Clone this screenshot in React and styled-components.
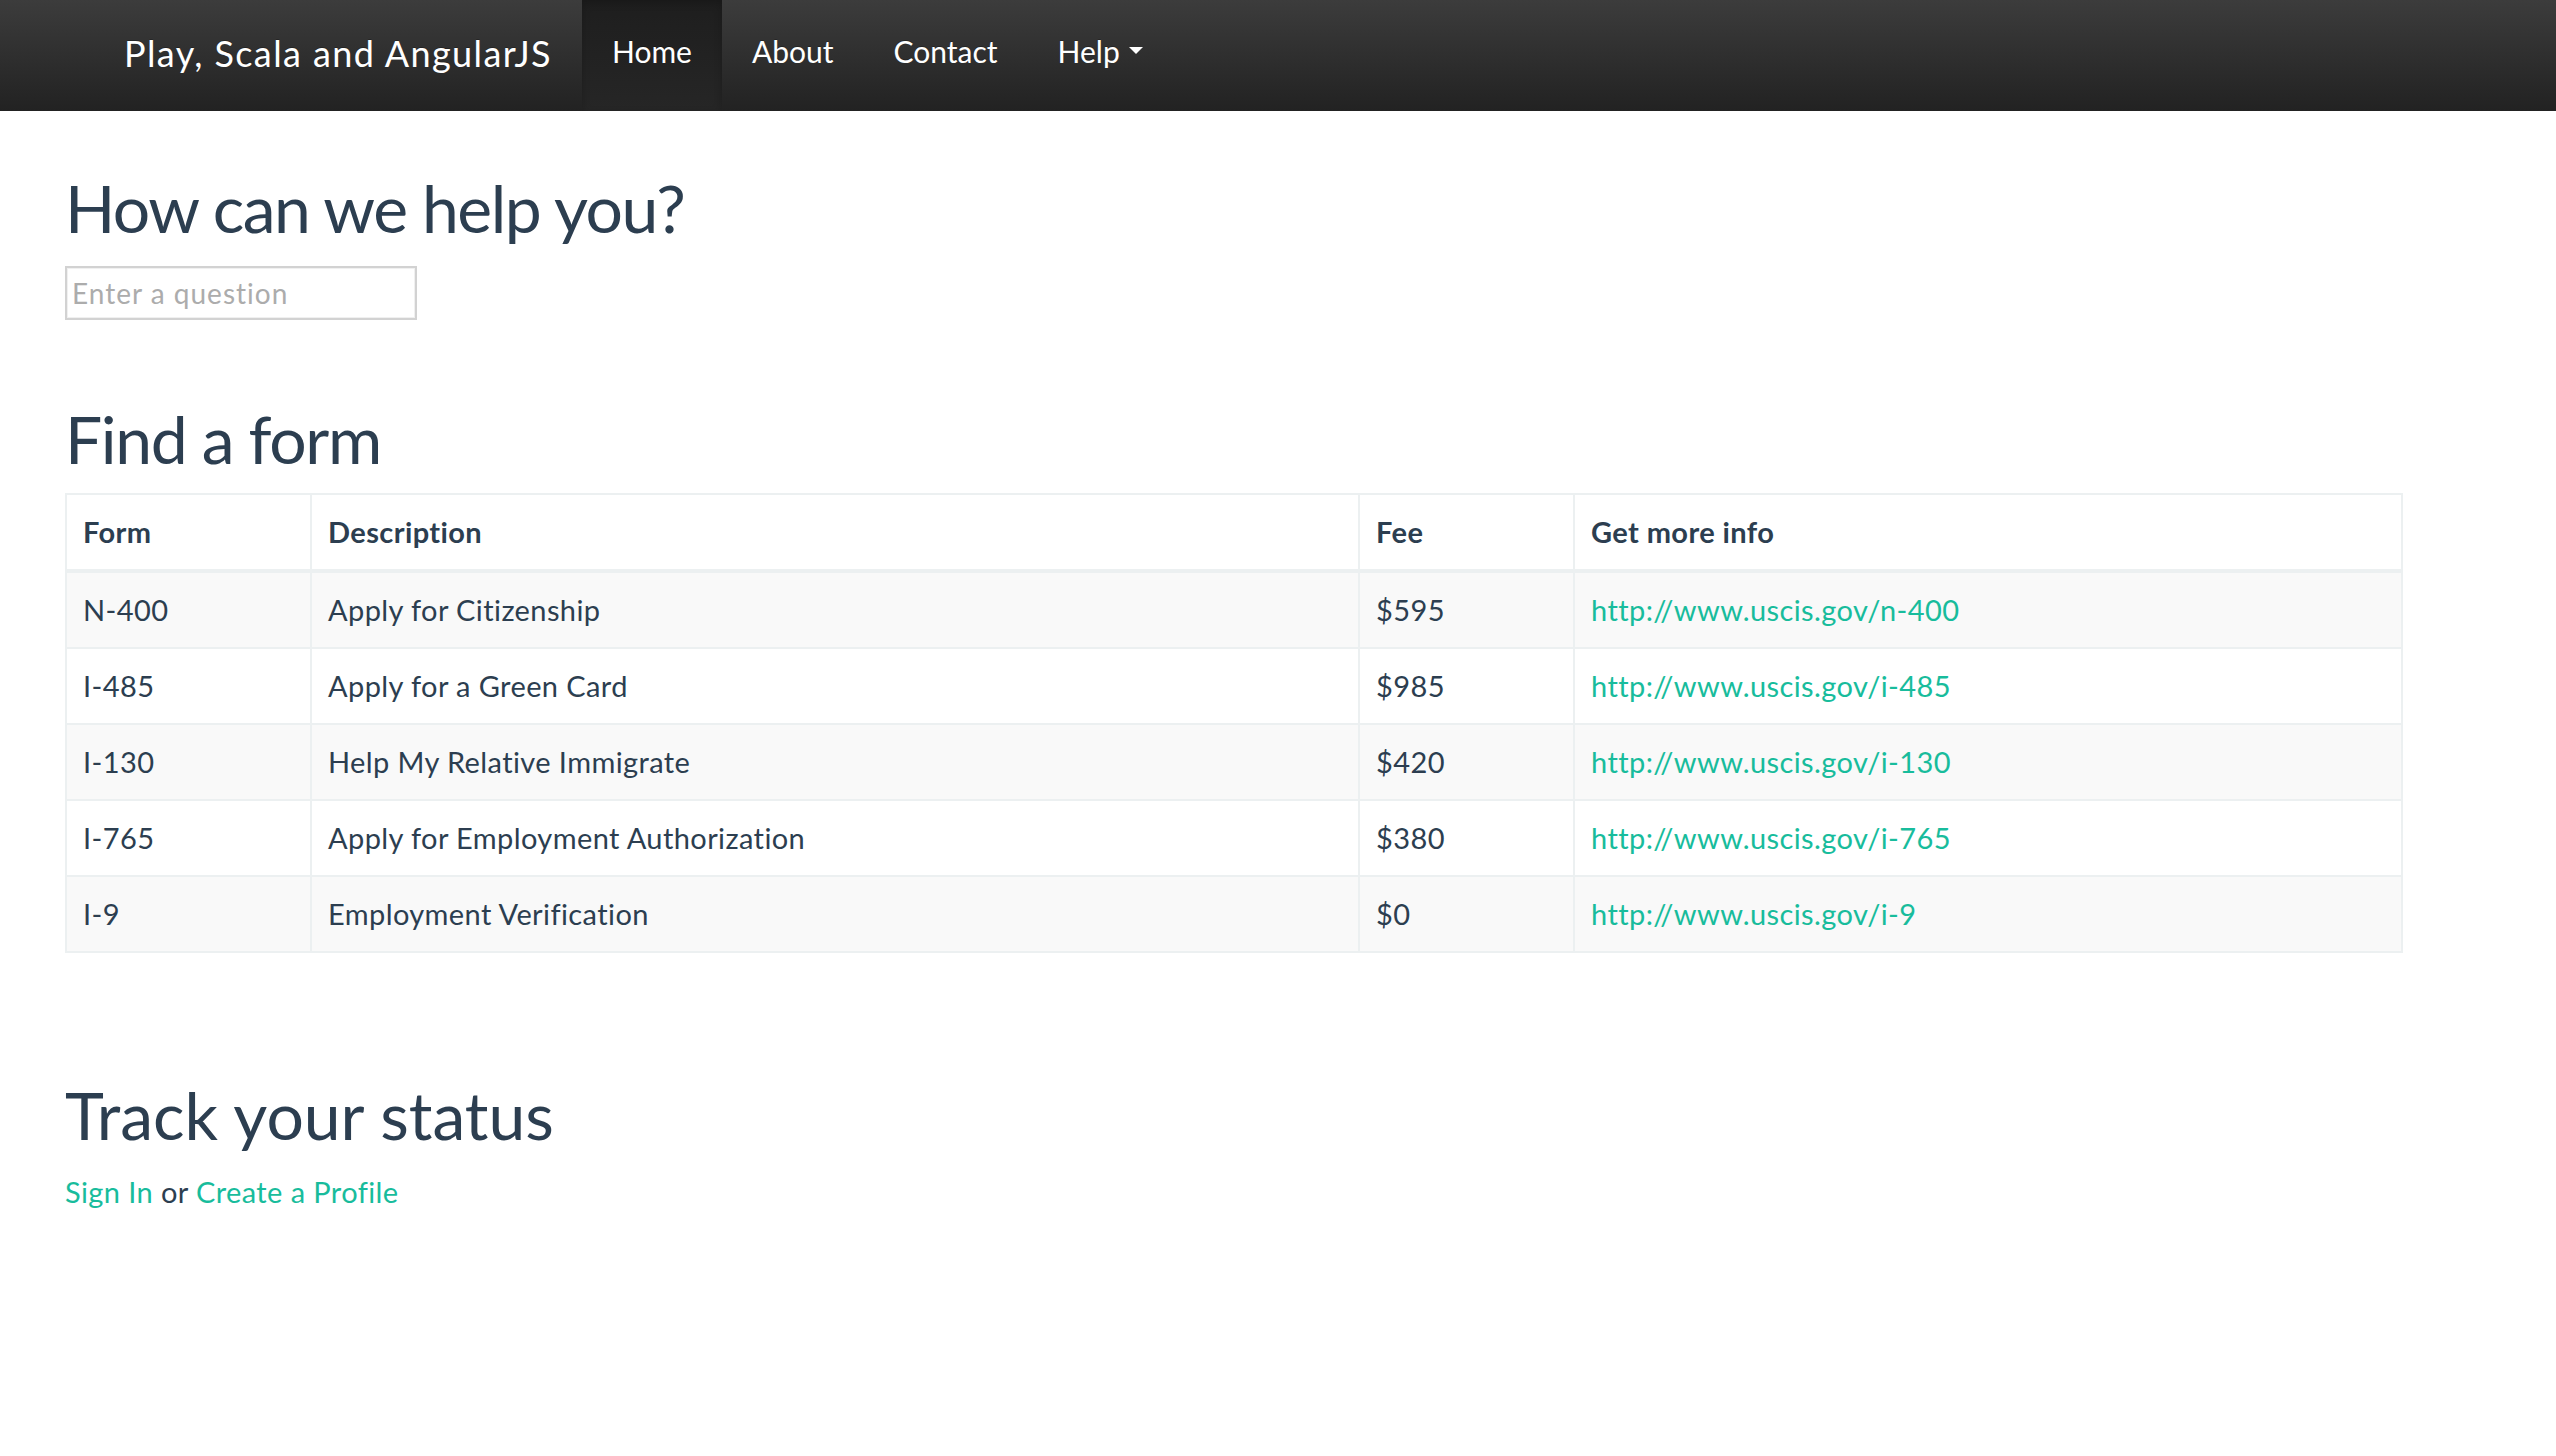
import styled, { createGlobalStyle } from "styled-components"

const GlobalStyle = createGlobalStyle`
    body {
        margin: 0;
        background: #fff;
        font-family: Lato, "Open Sans", sans-serif;
        color: #2c3e50;
    }
`

const Navbar = styled.nav`
    height: 111px;
    background: linear-gradient(to bottom, #3c3c3c 0%, #222 100%);
    display: flex;
    align-items: stretch;
    padding-left: 94px;
    box-sizing: border-box;
`

const Brand = styled.a`
    padding: 0 30px 4px 30px;
    line-height: 107px;
    font-size: 36px;
    letter-spacing: 1.4px;
    color: #fff;
    text-decoration: none;
    text-shadow: 0 -1px 0 rgba(0,0,0,0.25);
`

const NavList = styled.ul`
    display: flex;
    list-style: none;
    margin: 0;
    padding: 0;
`

const NavItem = styled.li`
    padding: 0 30px 10px 30px;
    line-height: 100px;
    font-size: 30px;
    color: #fff;
    text-shadow: 0 -1px 0 rgba(0,0,0,0.25);
    background: ${props => props.active ? "linear-gradient(to bottom, #1e1e1e 0%, #262626 100%)" : "transparent"};
    box-shadow: ${props => props.active ? "inset 0 3px 9px rgba(0,0,0,0.2)" : "none"};
    display: flex;
    align-items: center;
    gap: 9px;
`

const Caret = styled.span`
    display: inline-block;
    width: 0;
    height: 0;
    border-top: 7px solid #fff;
    border-left: 7px solid transparent;
    border-right: 7px solid transparent;
`

const Main = styled.main`
    padding: 0 65px;
`

const Heading = styled.h1`
    font-size: 66px;
    font-weight: 400;
    line-height: 1.1;
    letter-spacing: ${props => props.tracking || 0}px;
    margin: ${props => props.top}px 0 0 0;
    color: #2c3e50;
`

const QuestionInput = styled.input`
    display: block;
    margin-top: 21px;
    width: 352px;
    height: 54px;
    box-sizing: border-box;
    border: 2px solid #d2d2d2;
    box-shadow: inset 0 0 0 1px #f0f0f0;
    padding: 0 5px;
    font-family: Lato, sans-serif;
    font-size: 28px;
    letter-spacing: 1px;
    color: #2c3e50;
    outline: none;

    &::placeholder {
        color: #acacac;
    }
`

const Table = styled.table`
    margin-top: 18px;
    width: 2338px;
    border-collapse: collapse;
    border: 2px solid #ecf0f1;
    font-size: 29px;
    letter-spacing: 0.4px;

    th, td {
        border: 2px solid #ecf0f1;
        padding: 17px 16px;
        line-height: 40px;
        text-align: left;
        vertical-align: middle;
    }

    th {
        font-weight: 700;
        border-bottom-width: 4px;
        background: #fff;
    }

    tbody tr:nth-child(odd) {
        background: #f9f9f9;
    }

    a {
        color: #18bc9c;
        text-decoration: none;
    }
`

const StatusLine = styled.p`
    margin: 20px 0 0 0;
    font-size: 29px;
    line-height: 40px;
    letter-spacing: 0.4px;

    a {
        color: #18bc9c;
        text-decoration: none;
    }
`

const forms = [
    { form: "N-400", desc: "Apply for Citizenship", fee: "$595", url: "http://www.uscis.gov/n-400" },
    { form: "I-485", desc: "Apply for a Green Card", fee: "$985", url: "http://www.uscis.gov/i-485" },
    { form: "I-130", desc: "Help My Relative Immigrate", fee: "$420", url: "http://www.uscis.gov/i-130" },
    { form: "I-765", desc: "Apply for Employment Authorization", fee: "$380", url: "http://www.uscis.gov/i-765" },
    { form: "I-9", desc: "Employment Verification", fee: "$0", url: "http://www.uscis.gov/i-9" },
]

const App = () => {
    return (
        <>
            <GlobalStyle />
            <Navbar>
                <Brand href="#">Play, Scala and AngularJS</Brand>
                <NavList>
                    <NavItem active>Home</NavItem>
                    <NavItem>About</NavItem>
                    <NavItem>Contact</NavItem>
                    <NavItem>Help <Caret /></NavItem>
                </NavList>
            </Navbar>

            <Main>
                <Heading top={61} tracking={-1.5}>How can we help you?</Heading>
                <QuestionInput type="text" placeholder="Enter a question" />

                <Heading top={83} tracking={-1.4}>Find a form</Heading>
                <Table>
                    <colgroup>
                        <col style={{ width: "245px" }} />
                        <col style={{ width: "1048px" }} />
                        <col style={{ width: "215px" }} />
                        <col />
                    </colgroup>
                    <thead>
                        <tr>
                            <th>Form</th>
                            <th>Description</th>
                            <th>Fee</th>
                            <th>Get more info</th>
                        </tr>
                    </thead>
                    <tbody>
                        {forms.map(f => (
                            <tr key={f.form}>
                                <td>{f.form}</td>
                                <td>{f.desc}</td>
                                <td>{f.fee}</td>
                                <td><a href={f.url}>{f.url}</a></td>
                            </tr>
                        ))}
                    </tbody>
                </Table>

                <Heading top={126}>Track your status</Heading>
                <StatusLine>
                    <a href="#">Sign In</a> or <a href="#">Create a Profile</a>
                </StatusLine>
            </Main>
        </>
    )
}

export default App
